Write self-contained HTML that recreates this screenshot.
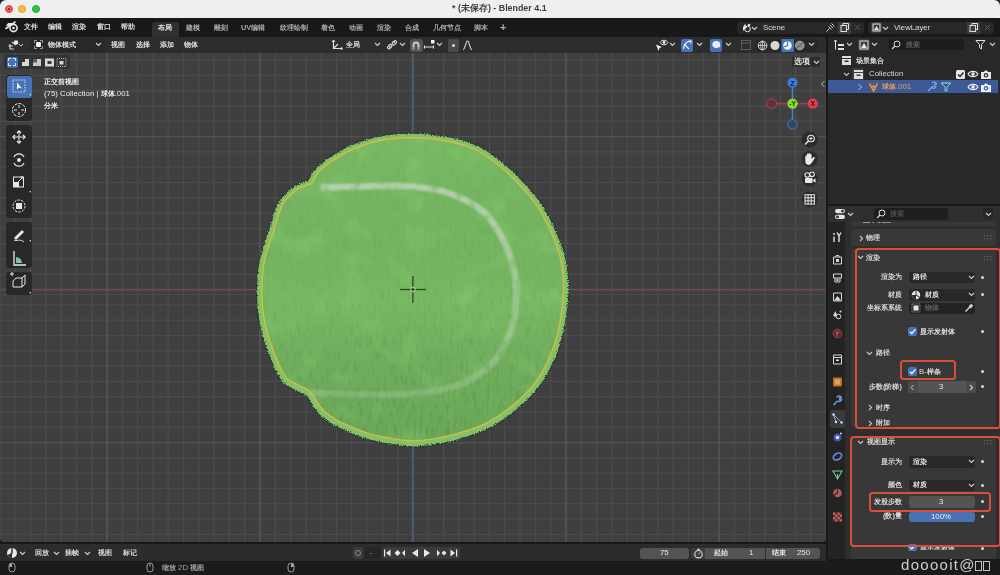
<!DOCTYPE html>
<html><head><meta charset="utf-8">
<style>
*{margin:0;padding:0;box-sizing:border-box}
html,body{width:1000px;height:575px;overflow:hidden;background:#181818;font-family:"Liberation Sans",sans-serif;color:#d8d8d8}
.a{position:absolute}
.t{position:absolute;font-size:7.4px;line-height:10px;white-space:nowrap;will-change:transform;font-weight:600}
.n{font-weight:400;font-size:7.8px}
#title{left:0;top:0;width:1000px;height:18px;background:#efeff0}
#topbar{left:0;top:18px;width:1000px;height:19px;background:#181818}
#outl{left:828px;top:37px;width:172px;height:167px;background:#282828}
#props{left:828px;top:206px;width:172px;height:353px;background:#303030}
#tl{left:0;top:544px;width:826px;height:16.5px;background:#2c2c2c}
#status{left:0;top:560.5px;width:1000px;height:14.5px;background:#1b1b1b}
</style></head><body>
<div id="title" class="a">
 <div class="a" style="left:5.2px;top:5.2px;width:8px;height:8px;border-radius:50%;background:#ec5e56;border:0.5px solid #d8483f"></div>
 <div class="a" style="left:18.4px;top:5.2px;width:8px;height:8px;border-radius:50%;background:#f5bd3c;border:0.5px solid #dca22a"></div>
 <div class="a" style="left:31.6px;top:5.2px;width:8px;height:8px;border-radius:50%;background:#2fc443;border:0.5px solid #22a834"></div>
 <div class="t" style="left:452px;top:3px;font-size:8.9px;line-height:11px;color:#3c3c3c;font-weight:bold">* (未保存) - Blender 4.1</div>
</div>
<svg class="a" style="left:0;top:0" width="8" height="8" viewBox="0 0 8 8"><path d="M0 0 L6 0 A6 6 0 0 0 0 6 Z" fill="#1f2a22"/></svg>
<svg class="a" style="left:992px;top:0" width="8" height="8" viewBox="0 0 8 8"><path d="M8 0 L2 0 A6 6 0 0 1 8 6 Z" fill="#2a2a2a"/></svg>
<div class="a" style="left:8px;top:8px;width:2.4px;height:2.4px;border-radius:50%;background:#8c1410"></div>
<div id="topbar" class="a">
 <svg class="a" style="left:4.5px;top:2px" width="14" height="13" viewBox="0 0 14 13"><path d="M1 8.5 L5.5 5 L2.5 5 L3.5 3.8 L7.5 3.8 L10 2" fill="none" stroke="#e8e8e8" stroke-width="1.6" stroke-linecap="round"/><circle cx="8.5" cy="8" r="3.6" fill="none" stroke="#e8e8e8" stroke-width="1.6"/><circle cx="8.5" cy="8" r="1.3" fill="#e8e8e8"/></svg>
 <div class="t" style="left:23.5px;top:4px;color:#dcdcdc">文件</div>
 <div class="t" style="left:47.5px;top:4px;color:#dcdcdc">编辑</div>
 <div class="t" style="left:72px;top:4px;color:#dcdcdc">渲染</div>
 <div class="t" style="left:96.5px;top:4px;color:#dcdcdc">窗口</div>
 <div class="t" style="left:121px;top:4px;color:#dcdcdc">帮助</div>
 <div class="a" style="left:152px;top:4px;width:27px;height:15px;background:#303030;border-radius:3px 3px 0 0"></div>
 <div class="t" style="left:157.5px;top:5px;color:#e8e8e8">布局</div>
 <div class="t" style="left:185.5px;top:5px;color:#a8a8a8">建模</div>
 <div class="t" style="left:213.5px;top:5px;color:#a8a8a8">雕刻</div>
 <div class="t" style="left:241px;top:5px;color:#a8a8a8">UV编辑</div>
 <div class="t" style="left:280px;top:5px;color:#a8a8a8">纹理绘制</div>
 <div class="t" style="left:321px;top:5px;color:#a8a8a8">着色</div>
 <div class="t" style="left:349px;top:5px;color:#a8a8a8">动画</div>
 <div class="t" style="left:377px;top:5px;color:#a8a8a8">渲染</div>
 <div class="t" style="left:405px;top:5px;color:#a8a8a8">合成</div>
 <div class="t" style="left:433px;top:5px;color:#a8a8a8">几何节点</div>
 <div class="t" style="left:474px;top:5px;color:#a8a8a8">脚本</div>
 <div class="t" style="left:500px;top:3px;font-size:11px;line-height:12px;color:#a8a8a8">+</div>
</div>
<svg class="a" style="left:0;top:0" width="1000" height="575" viewBox="0 0 1000 575">
 <defs>
  <clipPath id="vpc"><rect x="0" y="37" width="826" height="505" rx="4"/></clipPath>
  <clipPath id="ballc"><path d="M318.7 171.9 C320.9 169.5 323.3 167.0 328.5 163.4 C333.7 159.8 341.8 154.2 350.0 150.5 C358.2 146.8 368.0 143.1 378.0 141.0 C388.0 138.9 399.3 137.9 410.0 137.8 C420.7 137.7 432.7 138.9 442.0 140.2 C451.3 141.5 458.8 143.3 466.0 145.8 C473.2 148.3 478.0 150.4 485.0 155.0 C492.0 159.6 499.4 165.1 507.9 173.2 C516.4 181.3 528.4 193.8 535.7 203.8 C543.0 213.8 547.3 223.5 551.5 233.0 C555.7 242.5 559.0 251.5 561.0 261.0 C563.0 270.5 563.6 281.1 563.6 290.0 C563.6 298.9 562.4 306.6 561.3 314.3 C560.2 322.0 559.2 328.5 557.0 336.2 C554.8 343.9 552.0 352.5 548.1 360.6 C544.2 368.7 539.2 377.6 533.5 384.9 C527.8 392.2 521.3 398.3 514.0 404.4 C506.7 410.5 497.7 417.0 489.7 421.4 C481.7 425.8 473.6 428.4 466.0 431.0 C458.4 433.6 453.0 435.2 444.0 436.8 C435.0 438.4 424.0 441.2 412.0 440.8 C400.0 440.4 383.5 437.3 372.0 434.4 C360.5 431.5 350.2 426.6 343.0 423.3 C335.8 420.0 332.6 417.9 328.5 414.8 C324.4 411.8 321.1 408.1 318.7 405.0 C316.2 401.9 315.4 398.9 313.8 396.5 C312.2 394.1 310.8 392.0 309.0 390.5 C307.2 389.0 305.3 388.6 302.9 387.4 C300.5 386.2 297.5 385.1 294.4 383.1 C291.3 381.1 288.2 381.5 284.5 375.5 C280.8 369.5 275.4 356.7 272.0 347.3 C268.6 337.9 265.8 328.4 264.1 319.0 C262.4 309.6 261.9 300.3 261.9 290.9 C261.9 281.5 262.2 272.6 264.1 262.7 C266.0 252.8 270.5 240.9 273.5 231.3 C276.5 221.7 279.3 211.1 282.2 205.0 C285.1 198.9 288.1 197.7 290.7 195.0 C293.3 192.3 295.4 190.6 298.0 189.0 C300.6 187.4 304.3 186.2 306.5 185.3 C308.7 184.4 310.0 184.7 311.4 183.5 C312.8 182.3 313.8 179.9 315.0 178.0 C316.2 176.1 316.4 174.3 318.7 171.9Z"/></clipPath>
  <pattern id="grid" x="412.4" y="289" width="15.3" height="15.3" patternUnits="userSpaceOnUse">
   <rect x="0" y="0" width="15.3" height="1.1" fill="#4c4c4c"/>
   <rect x="0" y="0" width="1.1" height="15.3" fill="#4c4c4c"/>
  </pattern>
  <pattern id="grid10" x="412.4" y="289" width="153" height="153" patternUnits="userSpaceOnUse">
   <rect x="0" y="0" width="153" height="1.1" fill="#525252"/>
   <rect x="0" y="0" width="1.1" height="153" fill="#585858"/>
  </pattern>
  <filter id="fur" x="-10%" y="-10%" width="120%" height="120%">
   <feTurbulence type="fractalNoise" baseFrequency="1.1" numOctaves="2" seed="3" result="n"/>
   <feDisplacementMap in="SourceGraphic" in2="n" scale="4" xChannelSelector="R" yChannelSelector="G"/>
  </filter>
  <filter id="tex" x="0" y="0" width="100%" height="100%" filterUnits="userSpaceOnUse" color-interpolation-filters="sRGB">
   <feTurbulence type="fractalNoise" baseFrequency="0.3 0.08" numOctaves="3" seed="11" result="n"/>
   <feColorMatrix in="n" type="matrix" values="0 0 0 0 0.25  0 0 0 0 0.45  0 0 0 0 0.2  4 0 0 0 -2.1"/>
   <feGaussianBlur stdDeviation="0.6"/>
  </filter>
  <filter id="soft" x="-5%" y="-5%" width="110%" height="110%" color-interpolation-filters="sRGB"><feGaussianBlur stdDeviation="0.9" result="b"/>
   <feTurbulence type="fractalNoise" baseFrequency="0.1" numOctaves="2" seed="9" result="n"/>
   <feColorMatrix in="n" type="matrix" values="0 0 0 0 0  0 0 0 0 0  0 0 0 0 0  1.6 0 0 0 0.1" result="na"/>
   <feComposite in="b" in2="na" operator="in"/></filter>
  <linearGradient id="mg" x1="0" y1="0" x2="0" y2="1"><stop offset="0" stop-color="#fff" stop-opacity="0.15"/><stop offset="0.55" stop-color="#fff" stop-opacity="0.35"/><stop offset="1" stop-color="#fff" stop-opacity="1"/></linearGradient>
  <mask id="tm" maskUnits="userSpaceOnUse" x="255" y="130" width="320" height="320"><rect x="255" y="130" width="320" height="320" fill="url(#mg)"/></mask>
  <linearGradient id="seamg" x1="0" y1="185" x2="0" y2="395" gradientUnits="userSpaceOnUse"><stop offset="0" stop-color="#c9d8c4" stop-opacity="0.75"/><stop offset="0.5" stop-color="#c4d6bd" stop-opacity="0.6"/><stop offset="1" stop-color="#b4cfa8" stop-opacity="0.38"/></linearGradient>
  <filter id="mot" x="0" y="0" width="100%" height="100%" filterUnits="userSpaceOnUse" color-interpolation-filters="sRGB">
   <feTurbulence type="fractalNoise" baseFrequency="0.035" numOctaves="2" seed="5"/>
   <feColorMatrix type="matrix" values="0 0 0 0 0.6  0 0 0 0 0.85  0 0 0 0 0.5  3 0 0 0 -1.5"/>
  </filter>
  <linearGradient id="shade" x1="0" y1="0" x2="0" y2="1">
   <stop offset="0" stop-color="#8fcf70" stop-opacity="0.10"/>
   <stop offset="0.55" stop-color="#000" stop-opacity="0"/>
   <stop offset="1" stop-color="#2e5e22" stop-opacity="0.18"/>
  </linearGradient>
 </defs>
 <g clip-path="url(#vpc)">
  <rect x="0" y="37" width="826" height="505" fill="#3f3f3f"/>
  <rect x="0" y="37" width="826" height="505" fill="url(#grid)"/>
  <rect x="0" y="37" width="826" height="505" fill="url(#grid10)"/>
  <rect x="0" y="288.8" width="826" height="1.5" fill="#6e4a52"/>
  <rect x="0" y="294" width="826" height="1" fill="#4a5548" opacity="0.6"/>
  <rect x="411.7" y="37" width="1.8" height="505" fill="#4b5d72"/>
  <g transform="translate(0 0.8)"><path d="M318.7 171.9 C320.9 169.5 323.3 167.0 328.5 163.4 C333.7 159.8 341.8 154.2 350.0 150.5 C358.2 146.8 368.0 143.1 378.0 141.0 C388.0 138.9 399.3 137.9 410.0 137.8 C420.7 137.7 432.7 138.9 442.0 140.2 C451.3 141.5 458.8 143.3 466.0 145.8 C473.2 148.3 478.0 150.4 485.0 155.0 C492.0 159.6 499.4 165.1 507.9 173.2 C516.4 181.3 528.4 193.8 535.7 203.8 C543.0 213.8 547.3 223.5 551.5 233.0 C555.7 242.5 559.0 251.5 561.0 261.0 C563.0 270.5 563.6 281.1 563.6 290.0 C563.6 298.9 562.4 306.6 561.3 314.3 C560.2 322.0 559.2 328.5 557.0 336.2 C554.8 343.9 552.0 352.5 548.1 360.6 C544.2 368.7 539.2 377.6 533.5 384.9 C527.8 392.2 521.3 398.3 514.0 404.4 C506.7 410.5 497.7 417.0 489.7 421.4 C481.7 425.8 473.6 428.4 466.0 431.0 C458.4 433.6 453.0 435.2 444.0 436.8 C435.0 438.4 424.0 441.2 412.0 440.8 C400.0 440.4 383.5 437.3 372.0 434.4 C360.5 431.5 350.2 426.6 343.0 423.3 C335.8 420.0 332.6 417.9 328.5 414.8 C324.4 411.8 321.1 408.1 318.7 405.0 C316.2 401.9 315.4 398.9 313.8 396.5 C312.2 394.1 310.8 392.0 309.0 390.5 C307.2 389.0 305.3 388.6 302.9 387.4 C300.5 386.2 297.5 385.1 294.4 383.1 C291.3 381.1 288.2 381.5 284.5 375.5 C280.8 369.5 275.4 356.7 272.0 347.3 C268.6 337.9 265.8 328.4 264.1 319.0 C262.4 309.6 261.9 300.3 261.9 290.9 C261.9 281.5 262.2 272.6 264.1 262.7 C266.0 252.8 270.5 240.9 273.5 231.3 C276.5 221.7 279.3 211.1 282.2 205.0 C285.1 198.9 288.1 197.7 290.7 195.0 C293.3 192.3 295.4 190.6 298.0 189.0 C300.6 187.4 304.3 186.2 306.5 185.3 C308.7 184.4 310.0 184.7 311.4 183.5 C312.8 182.3 313.8 179.9 315.0 178.0 C316.2 176.1 316.4 174.3 318.7 171.9Z" fill="none" stroke="#262626" stroke-width="12" opacity="0.4" filter="url(#fur)"/></g>
  <g transform="translate(0 0.8)"><path d="M318.7 171.9 C320.9 169.5 323.3 167.0 328.5 163.4 C333.7 159.8 341.8 154.2 350.0 150.5 C358.2 146.8 368.0 143.1 378.0 141.0 C388.0 138.9 399.3 137.9 410.0 137.8 C420.7 137.7 432.7 138.9 442.0 140.2 C451.3 141.5 458.8 143.3 466.0 145.8 C473.2 148.3 478.0 150.4 485.0 155.0 C492.0 159.6 499.4 165.1 507.9 173.2 C516.4 181.3 528.4 193.8 535.7 203.8 C543.0 213.8 547.3 223.5 551.5 233.0 C555.7 242.5 559.0 251.5 561.0 261.0 C563.0 270.5 563.6 281.1 563.6 290.0 C563.6 298.9 562.4 306.6 561.3 314.3 C560.2 322.0 559.2 328.5 557.0 336.2 C554.8 343.9 552.0 352.5 548.1 360.6 C544.2 368.7 539.2 377.6 533.5 384.9 C527.8 392.2 521.3 398.3 514.0 404.4 C506.7 410.5 497.7 417.0 489.7 421.4 C481.7 425.8 473.6 428.4 466.0 431.0 C458.4 433.6 453.0 435.2 444.0 436.8 C435.0 438.4 424.0 441.2 412.0 440.8 C400.0 440.4 383.5 437.3 372.0 434.4 C360.5 431.5 350.2 426.6 343.0 423.3 C335.8 420.0 332.6 417.9 328.5 414.8 C324.4 411.8 321.1 408.1 318.7 405.0 C316.2 401.9 315.4 398.9 313.8 396.5 C312.2 394.1 310.8 392.0 309.0 390.5 C307.2 389.0 305.3 388.6 302.9 387.4 C300.5 386.2 297.5 385.1 294.4 383.1 C291.3 381.1 288.2 381.5 284.5 375.5 C280.8 369.5 275.4 356.7 272.0 347.3 C268.6 337.9 265.8 328.4 264.1 319.0 C262.4 309.6 261.9 300.3 261.9 290.9 C261.9 281.5 262.2 272.6 264.1 262.7 C266.0 252.8 270.5 240.9 273.5 231.3 C276.5 221.7 279.3 211.1 282.2 205.0 C285.1 198.9 288.1 197.7 290.7 195.0 C293.3 192.3 295.4 190.6 298.0 189.0 C300.6 187.4 304.3 186.2 306.5 185.3 C308.7 184.4 310.0 184.7 311.4 183.5 C312.8 182.3 313.8 179.9 315.0 178.0 C316.2 176.1 316.4 174.3 318.7 171.9Z" fill="#80c266" stroke="#80c266" stroke-width="9.5" filter="url(#fur)"/></g>
  <path d="M318.7 171.9 C320.9 169.5 323.3 167.0 328.5 163.4 C333.7 159.8 341.8 154.2 350.0 150.5 C358.2 146.8 368.0 143.1 378.0 141.0 C388.0 138.9 399.3 137.9 410.0 137.8 C420.7 137.7 432.7 138.9 442.0 140.2 C451.3 141.5 458.8 143.3 466.0 145.8 C473.2 148.3 478.0 150.4 485.0 155.0 C492.0 159.6 499.4 165.1 507.9 173.2 C516.4 181.3 528.4 193.8 535.7 203.8 C543.0 213.8 547.3 223.5 551.5 233.0 C555.7 242.5 559.0 251.5 561.0 261.0 C563.0 270.5 563.6 281.1 563.6 290.0 C563.6 298.9 562.4 306.6 561.3 314.3 C560.2 322.0 559.2 328.5 557.0 336.2 C554.8 343.9 552.0 352.5 548.1 360.6 C544.2 368.7 539.2 377.6 533.5 384.9 C527.8 392.2 521.3 398.3 514.0 404.4 C506.7 410.5 497.7 417.0 489.7 421.4 C481.7 425.8 473.6 428.4 466.0 431.0 C458.4 433.6 453.0 435.2 444.0 436.8 C435.0 438.4 424.0 441.2 412.0 440.8 C400.0 440.4 383.5 437.3 372.0 434.4 C360.5 431.5 350.2 426.6 343.0 423.3 C335.8 420.0 332.6 417.9 328.5 414.8 C324.4 411.8 321.1 408.1 318.7 405.0 C316.2 401.9 315.4 398.9 313.8 396.5 C312.2 394.1 310.8 392.0 309.0 390.5 C307.2 389.0 305.3 388.6 302.9 387.4 C300.5 386.2 297.5 385.1 294.4 383.1 C291.3 381.1 288.2 381.5 284.5 375.5 C280.8 369.5 275.4 356.7 272.0 347.3 C268.6 337.9 265.8 328.4 264.1 319.0 C262.4 309.6 261.9 300.3 261.9 290.9 C261.9 281.5 262.2 272.6 264.1 262.7 C266.0 252.8 270.5 240.9 273.5 231.3 C276.5 221.7 279.3 211.1 282.2 205.0 C285.1 198.9 288.1 197.7 290.7 195.0 C293.3 192.3 295.4 190.6 298.0 189.0 C300.6 187.4 304.3 186.2 306.5 185.3 C308.7 184.4 310.0 184.7 311.4 183.5 C312.8 182.3 313.8 179.9 315.0 178.0 C316.2 176.1 316.4 174.3 318.7 171.9Z" fill="#77b863"/>
  <g clip-path="url(#ballc)">
   <rect x="255" y="130" width="320" height="320" fill="url(#shade)"/>
   <rect x="255" y="130" width="320" height="320" filter="url(#mot)" opacity="0.25"/>
   <rect x="255" y="130" width="320" height="320" filter="url(#tex)" opacity="0.25" mask="url(#tm)"/>
  </g>
  <path d="M321.0 187.5 C328.3 187.3 350.9 186.8 365.0 186.5 C379.1 186.2 391.9 185.0 405.6 186.0 C419.3 187.0 433.9 188.1 447.0 192.5 C460.1 196.9 474.0 203.2 484.0 212.5 C494.0 221.8 501.6 234.9 507.0 248.0 C512.4 261.1 516.2 276.3 516.5 291.0 C516.8 305.7 513.7 323.3 509.0 336.0 C504.3 348.7 497.4 358.7 488.4 367.0 C479.4 375.3 466.4 381.7 455.0 386.0 C443.6 390.3 432.5 391.6 420.0 393.0 C407.5 394.4 393.2 394.3 380.0 394.5 C366.8 394.7 352.2 394.3 340.5 394.0 C328.8 393.7 315.1 392.8 310.0 392.5" fill="none" stroke="url(#seamg)" stroke-width="6.5" filter="url(#soft)"/>
  <path d="M318.7 171.9 C320.9 169.5 323.3 167.0 328.5 163.4 C333.7 159.8 341.8 154.2 350.0 150.5 C358.2 146.8 368.0 143.1 378.0 141.0 C388.0 138.9 399.3 137.9 410.0 137.8 C420.7 137.7 432.7 138.9 442.0 140.2 C451.3 141.5 458.8 143.3 466.0 145.8 C473.2 148.3 478.0 150.4 485.0 155.0 C492.0 159.6 499.4 165.1 507.9 173.2 C516.4 181.3 528.4 193.8 535.7 203.8 C543.0 213.8 547.3 223.5 551.5 233.0 C555.7 242.5 559.0 251.5 561.0 261.0 C563.0 270.5 563.6 281.1 563.6 290.0 C563.6 298.9 562.4 306.6 561.3 314.3 C560.2 322.0 559.2 328.5 557.0 336.2 C554.8 343.9 552.0 352.5 548.1 360.6 C544.2 368.7 539.2 377.6 533.5 384.9 C527.8 392.2 521.3 398.3 514.0 404.4 C506.7 410.5 497.7 417.0 489.7 421.4 C481.7 425.8 473.6 428.4 466.0 431.0 C458.4 433.6 453.0 435.2 444.0 436.8 C435.0 438.4 424.0 441.2 412.0 440.8 C400.0 440.4 383.5 437.3 372.0 434.4 C360.5 431.5 350.2 426.6 343.0 423.3 C335.8 420.0 332.6 417.9 328.5 414.8 C324.4 411.8 321.1 408.1 318.7 405.0 C316.2 401.9 315.4 398.9 313.8 396.5 C312.2 394.1 310.8 392.0 309.0 390.5 C307.2 389.0 305.3 388.6 302.9 387.4 C300.5 386.2 297.5 385.1 294.4 383.1 C291.3 381.1 288.2 381.5 284.5 375.5 C280.8 369.5 275.4 356.7 272.0 347.3 C268.6 337.9 265.8 328.4 264.1 319.0 C262.4 309.6 261.9 300.3 261.9 290.9 C261.9 281.5 262.2 272.6 264.1 262.7 C266.0 252.8 270.5 240.9 273.5 231.3 C276.5 221.7 279.3 211.1 282.2 205.0 C285.1 198.9 288.1 197.7 290.7 195.0 C293.3 192.3 295.4 190.6 298.0 189.0 C300.6 187.4 304.3 186.2 306.5 185.3 C308.7 184.4 310.0 184.7 311.4 183.5 C312.8 182.3 313.8 179.9 315.0 178.0 C316.2 176.1 316.4 174.3 318.7 171.9Z" fill="none" stroke="#d8b848" stroke-width="1.4"/>
  <g stroke="#2c4a1e" stroke-width="1.3">
   <line x1="400" y1="289.5" x2="426" y2="289.5"/><line x1="412.9" y1="276" x2="412.9" y2="303"/>
  </g>
  <circle cx="412.9" cy="289.5" r="2.3" fill="none" stroke="#c9d9a0" stroke-width="0.9"/>
 </g>
</svg>

<!-- viewport header -->
<div class="a" style="left:0;top:37px;width:826px;height:16px;background:#2d2d2d;border-radius:4px 4px 0 0"></div>
<svg class="a" style="left:8px;top:39px" width="16" height="12" viewBox="0 0 16 12"><path d="M2 10 L2 5 M0.5 7 L5 7 M2 10 L6 10 M4 3 L8 6" stroke="#d8d8d8" stroke-width="1.2" fill="none"/><circle cx="8" cy="3.5" r="2.3" fill="#e8e8e8"/><path d="M11 5 L13 7 L15 5" stroke="#cfcfcf" stroke-width="1" fill="none"/></svg>
<div class="a" style="left:31px;top:38.5px;width:74px;height:13px;background:#282828;border-radius:3px"></div>
<div class="a" style="left:34px;top:40px;width:9px;height:9px;border:1px dashed #9a9a9a;border-radius:1px"></div>
<div class="a" style="left:36px;top:42px;width:5px;height:5px;background:#f0f0f0;border-radius:1px"></div>
<div class="t" style="left:47.5px;top:40px;color:#dedede">物体模式</div>
<svg class="a" style="left:95px;top:42px" width="7" height="5" viewBox="0 0 7 5"><path d="M1 1 L3.5 3.5 L6 1" stroke="#d0d0d0" stroke-width="1.1" fill="none"/></svg>
<div class="t" style="left:111px;top:40px;color:#dedede">视图</div>
<div class="t" style="left:135.5px;top:40px;color:#dedede">选择</div>
<div class="t" style="left:159.5px;top:40px;color:#dedede">添加</div>
<div class="t" style="left:183.5px;top:40px;color:#dedede">物体</div>
<!-- transform orientation -->
<svg class="a" style="left:331px;top:39px" width="12" height="12" viewBox="0 0 12 12"><path d="M2.5 1 L2.5 9.5 L10.5 9.5 M2.5 9.5 L7 5" stroke="#e0e0e0" stroke-width="1.2" fill="none"/><path d="M1 3 L2.5 1 L4 3" stroke="#e0e0e0" stroke-width="1" fill="none"/><circle cx="10.5" cy="9.5" r="1.2" fill="#e0e0e0"/></svg>
<div class="t" style="left:346px;top:40px;color:#dedede">全局</div>
<svg class="a" style="left:374px;top:42px" width="7" height="5" viewBox="0 0 7 5"><path d="M1 1 L3.5 3.5 L6 1" stroke="#d0d0d0" stroke-width="1.1" fill="none"/></svg>
<svg class="a" style="left:386px;top:39px" width="12" height="12" viewBox="0 0 12 12"><path d="M3 8.5 L4.5 7 M7.5 4 L9 2.5" stroke="#e0e0e0" stroke-width="1.2"/><rect x="1.2" y="6.2" width="5" height="3" rx="1.5" transform="rotate(-45 3.7 7.7)" stroke="#e0e0e0" fill="none" stroke-width="1.1"/><rect x="5.8" y="2.3" width="5" height="3" rx="1.5" transform="rotate(-45 8.3 3.8)" stroke="#e0e0e0" fill="none" stroke-width="1.1"/></svg>
<svg class="a" style="left:398.5px;top:42px" width="7" height="5" viewBox="0 0 7 5"><path d="M1 1 L3.5 3.5 L6 1" stroke="#d0d0d0" stroke-width="1.1" fill="none"/></svg>
<div class="a" style="left:409.5px;top:38.5px;width:13px;height:13px;background:#545454;border-radius:3px"></div>
<svg class="a" style="left:410px;top:39px" width="12" height="12" viewBox="0 0 12 12"><path d="M3.5 10.5 L3.5 6 A2.5 2.5 0 0 1 8.5 6 L8.5 10.5" stroke="#c8c8c8" stroke-width="2" fill="none"/><path d="M2.5 9 L4.5 9 M7.5 9 L9.5 9" stroke="#4a4a4a" stroke-width="0.8"/></svg>
<svg class="a" style="left:423px;top:39px" width="13" height="12" viewBox="0 0 13 12"><path d="M1 8 L11 8 M1.5 6.5 L1.5 9.5 M10.5 6.5 L10.5 9.5" stroke="#e0e0e0" stroke-width="1.1" fill="none"/><rect x="8" y="1" width="3.5" height="3.5" fill="#f4f4f4"/></svg>
<svg class="a" style="left:435.5px;top:42px" width="7" height="5" viewBox="0 0 7 5"><path d="M1 1 L3.5 3.5 L6 1" stroke="#d0d0d0" stroke-width="1.1" fill="none"/></svg>
<div class="a" style="left:447.5px;top:38.5px;width:11px;height:13px;background:#4a4a4a;border-radius:2px"></div>
<div class="a" style="left:451.5px;top:43.5px;width:3px;height:3px;background:#dcdcdc;border-radius:50%"></div>
<svg class="a" style="left:462px;top:39px" width="11" height="12" viewBox="0 0 11 12"><path d="M1 10.5 C3.5 10.5 3.5 2 5.5 2 C7.5 2 7.5 10.5 10 10.5" stroke="#d8d8d8" stroke-width="1.1" fill="none"/></svg>
<!-- right header icons -->
<svg class="a" style="left:654px;top:38px" width="16" height="14" viewBox="0 0 16 14"><path d="M6 4.5 C8 1.5 12 1.5 14 4.5 C12 7.5 8 7.5 6 4.5Z" stroke="#e8e8e8" stroke-width="1" fill="none"/><circle cx="10" cy="4.5" r="1.4" fill="#e8e8e8"/><path d="M2 6.5 L8 9 L5.5 10 L4.5 13 Z" fill="#f0f0f0"/></svg>
<svg class="a" style="left:669px;top:42px" width="7" height="5" viewBox="0 0 7 5"><path d="M1 1 L3.5 3.5 L6 1" stroke="#d0d0d0" stroke-width="1.1" fill="none"/></svg>
<div class="a" style="left:680.5px;top:38.5px;width:12px;height:13px;background:#4772b3;border-radius:2px"></div>
<svg class="a" style="left:680.5px;top:39px" width="12" height="12" viewBox="0 0 12 12"><path d="M2.5 10 C3 5 6 2.5 10 2" stroke="#eaf0ff" stroke-width="1.2" fill="none"/><path d="M3 5 L8 10 M7.5 2 L10 2 L10 4.5" stroke="#eaf0ff" stroke-width="1.1" fill="none"/></svg>
<svg class="a" style="left:696px;top:42px" width="7" height="5" viewBox="0 0 7 5"><path d="M1 1 L3.5 3.5 L6 1" stroke="#d0d0d0" stroke-width="1.1" fill="none"/></svg>
<div class="a" style="left:710px;top:38.5px;width:12px;height:13px;background:#4772b3;border-radius:2px"></div>
<svg class="a" style="left:710px;top:39px" width="12" height="12" viewBox="0 0 12 12"><circle cx="6.3" cy="6" r="4" fill="#e6eeff"/><path d="M2 7 C3 10 7 10.5 9.5 8.5" stroke="#4772b3" stroke-width="1.3" fill="none"/></svg>
<svg class="a" style="left:725px;top:42px" width="7" height="5" viewBox="0 0 7 5"><path d="M1 1 L3.5 3.5 L6 1" stroke="#d0d0d0" stroke-width="1.1" fill="none"/></svg>
<svg class="a" style="left:740px;top:39px" width="12" height="12" viewBox="0 0 12 12"><rect x="1.5" y="1.5" width="9" height="9" stroke="#5c5c5c" stroke-width="1" fill="none"/><path d="M1.5 4 L10.5 4" stroke="#5c5c5c"/></svg>
<div class="a" style="left:756px;top:38.5px;width:62px;height:13px;background:#282828;border-radius:3px"></div>
<svg class="a" style="left:756px;top:38.5px" width="62" height="13" viewBox="0 0 62 13"><circle cx="6.6" cy="6.5" r="4.3" stroke="#d8d8d8" stroke-width="1" fill="none"/><path d="M2.3 6.5 L10.9 6.5 M6.6 2.2 L6.6 10.8" stroke="#d8d8d8" stroke-width="0.8"/><ellipse cx="6.6" cy="6.5" rx="2" ry="4.3" stroke="#d8d8d8" stroke-width="0.8" fill="none"/><circle cx="19" cy="6.5" r="4.5" fill="#d6d6d6"/><rect x="25.5" y="0" width="12.5" height="13" fill="#4772b3"/><circle cx="31.5" cy="6.5" r="4.3" fill="#f0f4ff"/><path d="M31.5 2.2 L31.5 6.5 L27.5 8" stroke="#4772b3" stroke-width="1.2" fill="none"/><circle cx="43.8" cy="6.5" r="4.3" fill="#8a8a8a" stroke="#c0c0c0" stroke-width="0.8"/><path d="M40.5 9 L47 4" stroke="#555" stroke-width="1"/></svg>
<svg class="a" style="left:808px;top:42px" width="7" height="5" viewBox="0 0 7 5"><path d="M1 1 L3.5 3.5 L6 1" stroke="#d0d0d0" stroke-width="1.1" fill="none"/></svg>

<!-- select mode icons -->
<div class="a" style="left:4px;top:55px;width:66px;height:14px;background:rgba(40,40,40,0.55);border-radius:3px"></div>
<div class="a" style="left:6.5px;top:56.5px;width:11px;height:11px;background:#4772b3;border-radius:2px"></div>
<div class="a" style="left:8px;top:58px;width:8px;height:8px;border:1px dashed #cfe0ff"></div>
<svg class="a" style="left:19px;top:56px" width="50" height="12" viewBox="0 0 50 12"><path d="M3 10 L3 6 L6 6 L6 3 L10 3 L10 10Z" fill="#d8d8d8"/><rect x="14" y="3" width="8" height="7" fill="#c8c8c8"/><rect x="14" y="3" width="4" height="3.5" fill="#5a5a5a"/><rect x="26" y="2.5" width="9" height="8" fill="#d8d8d8"/><rect x="28.5" y="5" width="4" height="3" fill="#3a3a3a"/><rect x="38" y="2.5" width="9" height="8" fill="none" stroke="#bdbdbd" stroke-dasharray="1 1"/><rect x="40.5" y="5" width="4" height="3.5" fill="#d8d8d8"/></svg>
<!-- toolbar -->
<div class="a" style="left:6px;top:75px;width:26px;height:46px;background:#282828;border-radius:3px"></div>
<div class="a" style="left:6px;top:125px;width:26px;height:93px;background:#282828;border-radius:3px"></div>
<div class="a" style="left:6px;top:222px;width:26px;height:46px;background:#282828;border-radius:3px"></div>
<div class="a" style="left:6px;top:272px;width:26px;height:23px;background:#282828;border-radius:3px"></div>
<div class="a" style="left:6.5px;top:76px;width:25px;height:22px;background:#4772b3;border-radius:3px"></div>
<svg class="a" style="left:6px;top:75px" width="26" height="222" viewBox="0 0 26 222">
 <g fill="none" stroke="#e8e8e8" stroke-width="1">
  <rect x="7" y="5" width="12" height="12" stroke-dasharray="1.5 1.2" stroke="#d4e2ff"/>
  <path d="M11 7.5 L11 14.5 L13 12.5 L16 13.5 Z" fill="#ffffff" stroke="none"/>
  <circle cx="13" cy="35" r="6.5" stroke-dasharray="3 1.2"/>
  <path d="M13 30 L13 33 M13 37 L13 40 M8 35 L11 35 M15 35 L18 35"/>
  <path d="M13 56 L13 68 M7 62 L19 62"/>
  <path d="M11 58 L13 56 L15 58 M11 66 L13 68 L15 66 M9 60 L7 62 L9 64 M17 60 L19 62 L17 64" stroke-width="1.3"/>
  <path d="M8 82 A5.5 5.5 0 0 1 18 82 M18 88 A5.5 5.5 0 0 1 8 88" stroke-width="1.2"/>
  <circle cx="13" cy="85" r="2" fill="#e8e8e8" stroke="none"/>
  <rect x="7.5" y="102" width="10" height="10"/>
  <rect x="8" y="107" width="5" height="5" fill="#e8e8e8" stroke="none"/>
  <path d="M12 107 L17 102 M14.5 102 L17 102 L17 104.5"/>
  <circle cx="13" cy="131" r="6" stroke-dasharray="2.5 1.2"/>
  <rect x="10" y="128" width="6" height="6" fill="#e8e8e8" stroke="none"/>
  <path d="M8 163 L16 155 L18 157 L10 165 Z" fill="#e8e8e8" stroke="none"/>
  <path d="M8 165 C10 167 14 163 18 167" stroke-width="0.9"/>
  <path d="M8 176 L8 190 L20 190" stroke-width="1.3"/>
  <path d="M10 188 L10 182 A6 6 0 0 1 16 188 Z" fill="#7ec49a" stroke="none"/>
  <path d="M10 203 L16 203 L16 212 L7 212 L7 206 Z M7 206 L10 203 M16 203 L19 200 L19 209 L16 212" stroke-width="1"/>
  <path d="M4 199 L8 199 M6 197 L6 201" stroke-width="1"/>
 </g>
 <g fill="#c8c8c8"><path d="M23 19 L25 19 L25 21Z"/><path d="M23 116 L25 116 L25 118Z"/><path d="M23 165 L25 165 L25 167Z"/><path d="M23 217 L25 217 L25 219Z"/></g>
</svg>
<!-- overlay text -->
<div class="t" style="left:44px;top:76.5px;font-size:7.4px;color:#ececec">正交前视图</div>
<div class="t" style="left:44px;top:88.5px;font-size:7.4px;color:#ececec"><span class="n">(75) Collection | </span>球体<span class="n">.001</span></div>
<div class="t" style="left:44px;top:100.5px;font-size:7.4px;color:#ececec">分米</div>
<!-- options -->
<div class="a" style="left:792px;top:57px;width:28px;height:10px;background:rgba(40,40,40,0.8);border-radius:2px"></div>
<div class="t" style="left:794px;top:57px;font-size:7.6px;color:#e0e0e0">选项</div>
<svg class="a" style="left:812.5px;top:60px" width="7" height="5" viewBox="0 0 7 5"><path d="M1 1 L3.5 3.5 L6 1" stroke="#d0d0d0" stroke-width="1.1" fill="none"/></svg>
<svg class="a" style="left:820px;top:80px" width="6" height="8" viewBox="0 0 6 8"><path d="M4.5 1 L1.5 4 L4.5 7" stroke="#bdbdbd" stroke-width="1" fill="none"/></svg>
<!-- nav gizmo -->
<svg class="a" style="left:760px;top:72px" width="66" height="64" viewBox="760 72 66 64">
 <path d="M771.7 103.6 L812.8 103.6" stroke="#a33c4a" stroke-width="1.6"/>
 <path d="M792.5 82.8 L792.5 124.4" stroke="#4a7cc0" stroke-width="1.6"/>
 <circle cx="771.7" cy="103.6" r="4.8" fill="#5e3038" stroke="#b8404f" stroke-width="1"/>
 <circle cx="792.5" cy="124.4" r="4.8" fill="#2e4866" stroke="#4a7cc0" stroke-width="1"/>
 <circle cx="812.8" cy="103.6" r="5" fill="#e0404f"/>
 <circle cx="792.5" cy="82.8" r="5" fill="#3d7fdc"/>
 <circle cx="792.5" cy="103.6" r="5.2" fill="#8ad82a"/>
 <text x="812.8" y="106.3" font-size="7" font-family="Liberation Sans" font-weight="bold" text-anchor="middle" fill="#3a0a10">X</text>
 <text x="792.5" y="85.5" font-size="7" font-family="Liberation Sans" font-weight="bold" text-anchor="middle" fill="#0a1a3a">Z</text>
 <text x="792.5" y="106.3" font-size="6.5" font-family="Liberation Sans" font-weight="bold" text-anchor="middle" fill="#1a3a00">-Y</text>
</svg>
<!-- nav buttons -->
<svg class="a" style="left:799px;top:130px" width="22" height="82" viewBox="799 130 22 82">
 <circle cx="809.7" cy="139.7" r="8" fill="rgba(30,30,30,0.6)"/>
 <circle cx="809.7" cy="159" r="8" fill="rgba(30,30,30,0.6)"/>
 <circle cx="809.7" cy="178.6" r="8" fill="rgba(30,30,30,0.6)"/>
 <circle cx="809.7" cy="199.4" r="8" fill="rgba(30,30,30,0.6)"/>
 <circle cx="811" cy="138.5" r="3.3" fill="none" stroke="#eaeaea" stroke-width="1.1"/>
 <path d="M808.5 141 L805 144.5" stroke="#eaeaea" stroke-width="1.5"/>
 <path d="M811 136.8 L811 140.2 M809.3 138.5 L812.7 138.5" stroke="#eaeaea" stroke-width="0.9"/>
 <path d="M805.3 157 C805.3 155 806.8 155 806.8 157 L806.8 155 C806.8 153 808.4 153 808.4 155 L808.4 154.3 C808.4 152.5 810 152.5 810 154.3 L810 155 C810 153.3 811.6 153.3 811.6 155 L811.6 159 L813 157.5 C814 156.5 815.3 157.3 814.6 158.5 L812 162.5 C811 164 810 164.8 808.5 164.8 C806.3 164.8 805.3 163.5 805.3 161 Z" fill="#eaeaea"/>
 <circle cx="807.3" cy="175" r="2.3" fill="none" stroke="#eaeaea" stroke-width="1.1"/>
 <circle cx="812" cy="174.3" r="2.3" fill="none" stroke="#eaeaea" stroke-width="1.1"/>
 <rect x="805" y="178" width="7.5" height="5" rx="0.8" fill="#eaeaea"/>
 <path d="M812.5 180.5 L815.5 178.3 L815.5 182.7 Z" fill="#eaeaea"/>
 <g stroke="#eaeaea" stroke-width="1" fill="none"><rect x="805" y="194.7" width="9.4" height="9.4"/><path d="M808.1 194.7 L808.1 204.1 M811.2 194.7 L811.2 204.1 M805 197.8 L814.4 197.8 M805 200.9 L814.4 200.9"/></g>
</svg>
<div id="outl" class="a"></div>

<!-- scene / viewlayer selectors in topbar -->
<div class="a" style="left:737px;top:21.5px;width:127px;height:12px;background:#282828;border-radius:3px"></div>
<svg class="a" style="left:741px;top:22px" width="11" height="11" viewBox="0 0 11 11"><path d="M2 9 L2 5 L4 2 L6 5" fill="#e0e0e0"/><circle cx="6.5" cy="7" r="2.8" fill="none" stroke="#e0e0e0" stroke-width="1"/><circle cx="8" cy="3" r="1.3" fill="#e0e0e0"/></svg>
<svg class="a" style="left:751px;top:26px" width="7" height="5" viewBox="0 0 7 5"><path d="M1 1 L3.5 3.5 L6 1" stroke="#cfcfcf" stroke-width="1.1" fill="none"/></svg>
<div class="t n" style="left:763px;top:22.5px;color:#dedede">Scene</div>
<svg class="a" style="left:825px;top:22px" width="11" height="11" viewBox="0 0 11 11"><path d="M1.5 9.5 L4.5 6.5 M3.5 4.5 L6.5 7.5 M5 3 L8 6 M6.5 1.5 L9.5 4.5" stroke="#cfcfcf" stroke-width="1" fill="none"/></svg>
<div class="a" style="left:838px;top:21.5px;width:13px;height:12px;background:#3d3d3d"></div>
<svg class="a" style="left:839px;top:22px" width="11" height="11" viewBox="0 0 11 11"><rect x="2" y="3.5" width="5.5" height="6" fill="none" stroke="#e0e0e0" stroke-width="1"/><path d="M4 3.5 L4 1.5 L9.5 1.5 L9.5 7.5 L7.5 7.5" fill="none" stroke="#e0e0e0" stroke-width="1"/></svg>
<svg class="a" style="left:853px;top:23px" width="9" height="9" viewBox="0 0 9 9"><path d="M2 2 L7 7 M7 2 L2 7" stroke="#5a5a5a" stroke-width="1"/></svg>
<div class="a" style="left:868px;top:21.5px;width:126px;height:12px;background:#282828;border-radius:3px"></div>
<div class="a" style="left:871px;top:22px;width:11px;height:11px;background:#3d3d3d;border-radius:2px"></div>
<svg class="a" style="left:871px;top:22px" width="11" height="11" viewBox="0 0 11 11"><rect x="2" y="2" width="7" height="7" fill="none" stroke="#e0e0e0" stroke-width="1"/><path d="M3 8 L5.5 4 L8 8Z" fill="#e0e0e0"/></svg>
<svg class="a" style="left:882px;top:26px" width="7" height="5" viewBox="0 0 7 5"><path d="M1 1 L3.5 3.5 L6 1" stroke="#cfcfcf" stroke-width="1.1" fill="none"/></svg>
<div class="t n" style="left:893.5px;top:22.5px;color:#dedede">ViewLayer</div>
<div class="a" style="left:967px;top:21.5px;width:13px;height:12px;background:#3d3d3d"></div>
<svg class="a" style="left:968px;top:22px" width="11" height="11" viewBox="0 0 11 11"><rect x="2" y="3.5" width="5.5" height="6" fill="none" stroke="#e0e0e0" stroke-width="1"/><path d="M4 3.5 L4 1.5 L9.5 1.5 L9.5 7.5 L7.5 7.5" fill="none" stroke="#e0e0e0" stroke-width="1"/></svg>
<svg class="a" style="left:982.5px;top:23px" width="9" height="9" viewBox="0 0 9 9"><path d="M2 2 L7 7 M7 2 L2 7" stroke="#5a5a5a" stroke-width="1"/></svg>
<!-- outliner -->
<div class="a" style="left:828px;top:37px;width:172px;height:16px;background:#282828"></div>
<svg class="a" style="left:833px;top:38.5px" width="12" height="13" viewBox="0 0 12 13"><rect x="1.5" y="1" width="2" height="2" fill="#e0e0e0"/><rect x="2" y="3" width="1" height="7.5" fill="#e0e0e0"/><rect x="5" y="5" width="6" height="2" fill="#e0e0e0"/><rect x="5" y="9" width="6" height="2" fill="#e0e0e0"/></svg>
<svg class="a" style="left:845.5px;top:42px" width="7" height="5" viewBox="0 0 7 5"><path d="M1 1 L3.5 3.5 L6 1" stroke="#cfcfcf" stroke-width="1.1" fill="none"/></svg>
<div class="a" style="left:858px;top:38.5px;width:12px;height:12px;background:#3d3d3d;border-radius:2px"></div>
<svg class="a" style="left:858px;top:38.5px" width="12" height="12" viewBox="0 0 12 12"><rect x="2" y="2" width="8" height="8" fill="none" stroke="#e8e8e8" stroke-width="1"/><path d="M3 9 L6 4 L9 9Z" fill="#e8e8e8"/></svg>
<svg class="a" style="left:871px;top:42px" width="7" height="5" viewBox="0 0 7 5"><path d="M1 1 L3.5 3.5 L6 1" stroke="#cfcfcf" stroke-width="1.1" fill="none"/></svg>
<div class="a" style="left:889px;top:39px;width:75px;height:11px;background:#1d1d1d;border-radius:3px"></div>
<svg class="a" style="left:891px;top:39.5px" width="10" height="10" viewBox="0 0 10 10"><circle cx="6" cy="4" r="3" fill="none" stroke="#dcdcdc" stroke-width="1"/><path d="M4 6 L1 9" stroke="#dcdcdc" stroke-width="1.3"/></svg>
<div class="t" style="left:905.5px;top:39.5px;color:#5e5e5e">搜索</div>
<svg class="a" style="left:975px;top:39px" width="11" height="11" viewBox="0 0 11 11"><path d="M1 1.5 L10 1.5 L6.5 5.5 L6.5 10 L4.5 8.5 L4.5 5.5 Z" fill="none" stroke="#e0e0e0" stroke-width="1"/></svg>
<svg class="a" style="left:988.5px;top:42px" width="7" height="5" viewBox="0 0 7 5"><path d="M1 1 L3.5 3.5 L6 1" stroke="#cfcfcf" stroke-width="1.1" fill="none"/></svg>
<svg class="a" style="left:841px;top:55px" width="11" height="11" viewBox="0 0 11 11"><rect x="1" y="1" width="9" height="9" fill="#dedede"/><rect x="1" y="3" width="9" height="1" fill="#282828"/><rect x="3.5" y="5.5" width="4" height="1.5" fill="#282828"/></svg>
<div class="t" style="left:856px;top:56px;color:#dcdcdc">场景集合</div>
<svg class="a" style="left:843px;top:72px" width="7" height="5" viewBox="0 0 7 5"><path d="M1 1 L3.5 3.5 L6 1" stroke="#bdbdbd" stroke-width="1.1" fill="none"/></svg>
<div class="a" style="left:852px;top:68px;width:12px;height:12px;background:#3d3d3d;border-radius:2px"></div>
<svg class="a" style="left:852.5px;top:68.5px" width="11" height="11" viewBox="0 0 11 11"><rect x="1" y="1" width="9" height="9" fill="#dedede"/><rect x="1" y="3" width="9" height="1" fill="#3d3d3d"/><rect x="3.5" y="5.5" width="4" height="1.5" fill="#3d3d3d"/></svg>
<div class="t n" style="left:869px;top:69px;color:#d8d8d8">Collection</div>
<div class="a" style="left:955.5px;top:69.5px;width:9px;height:9px;background:#e8e8e8;border-radius:1.5px"></div>
<svg class="a" style="left:955.5px;top:69.5px" width="9" height="9" viewBox="0 0 9 9"><path d="M2 4.5 L4 6.5 L7.5 2.5" stroke="#222" stroke-width="1.4" fill="none"/></svg>
<svg class="a" style="left:967px;top:69px" width="12" height="10" viewBox="0 0 12 10"><path d="M1 5 C3 1.5 9 1.5 11 5 C9 8.5 3 8.5 1 5Z" fill="none" stroke="#e8e8e8" stroke-width="1.1"/><circle cx="6" cy="5" r="1.8" fill="#e8e8e8"/></svg>
<svg class="a" style="left:980px;top:68.5px" width="12" height="11" viewBox="0 0 12 11"><path d="M1 3 L4 3 L5 1.5 L7 1.5 L8 3 L11 3 L11 10 L1 10Z" fill="#e8e8e8"/><circle cx="6" cy="6.3" r="2.2" fill="#282828"/><circle cx="6" cy="6.3" r="1.1" fill="#e8e8e8"/></svg>
<div class="a" style="left:828px;top:80px;width:170px;height:13px;background:#3b5a96"></div>
<svg class="a" style="left:857px;top:83px" width="6" height="8" viewBox="0 0 6 8"><path d="M1.5 1 L4.5 4 L1.5 7" stroke="#a8c0ee" stroke-width="1" fill="none"/></svg>
<div class="a" style="left:867px;top:81px;width:12px;height:11px;background:#5a5a6a;border-radius:2px;opacity:0.6"></div>
<svg class="a" style="left:867.5px;top:81.5px" width="11" height="10" viewBox="0 0 11 10"><path d="M1.5 1.5 L5.5 9 L9.5 1.5" stroke="#e8a04a" stroke-width="1.4" fill="none"/><circle cx="5.5" cy="4.5" r="1.3" fill="#e8a04a"/></svg>
<div class="t" style="left:881.5px;top:82px;color:#e89d57">球体<span class="n">.001</span></div>
<svg class="a" style="left:926px;top:81px" width="12" height="11" viewBox="0 0 12 11"><path d="M2 10 L7 5 M6 2 C7.5 0.5 10 1 10.5 3 L8.5 3.5 L8.5 5 L10 5.5 C9 8 6.5 7.5 6 6.5" stroke="#7ba7f0" stroke-width="1.2" fill="none"/></svg>
<svg class="a" style="left:940px;top:81px" width="12" height="11" viewBox="0 0 12 11"><path d="M1 2 L11 2 L7 6 L7 10 L5 10 L5 6 Z" fill="none" stroke="#7ed3c4" stroke-width="1"/><path d="M3 1 L3 3 M6 0.5 L6 3 M9 1 L9 3" stroke="#7ed3c4" stroke-width="0.8"/></svg>
<svg class="a" style="left:967px;top:82px" width="12" height="10" viewBox="0 0 12 10"><path d="M1 5 C3 1.5 9 1.5 11 5 C9 8.5 3 8.5 1 5Z" fill="none" stroke="#e8eeff" stroke-width="1.1"/><circle cx="6" cy="5" r="1.8" fill="#e8eeff"/></svg>
<svg class="a" style="left:980px;top:81.5px" width="12" height="11" viewBox="0 0 12 11"><path d="M1 3 L4 3 L5 1.5 L7 1.5 L8 3 L11 3 L11 10 L1 10Z" fill="#e8eeff"/><circle cx="6" cy="6.3" r="2.2" fill="#3b5a96"/><circle cx="6" cy="6.3" r="1.1" fill="#e8eeff"/></svg>
<div id="props" class="a"></div>
<!-- properties -->
<div class="a" style="left:828px;top:206px;width:172px;height:16px;background:#2f2f2f"></div>
<svg class="a" style="left:834px;top:208px" width="12" height="12" viewBox="0 0 12 12"><rect x="1" y="1" width="10" height="4.2" rx="2.1" fill="#e4e4e4"/><rect x="1" y="6.8" width="10" height="4.2" rx="2.1" fill="#e4e4e4"/><circle cx="8.5" cy="3.1" r="1.4" fill="#2f2f2f"/><circle cx="3.5" cy="8.9" r="1.4" fill="#2f2f2f"/></svg>
<svg class="a" style="left:846.5px;top:212px" width="7" height="5" viewBox="0 0 7 5"><path d="M1 1 L3.5 3.5 L6 1" stroke="#cfcfcf" stroke-width="1.1" fill="none"/></svg>
<div class="a" style="left:873.5px;top:208px;width:74px;height:11.5px;background:#1f1f1f;border-radius:3px"></div>
<svg class="a" style="left:876px;top:208.5px" width="10" height="10" viewBox="0 0 10 10"><circle cx="6" cy="4" r="3" fill="none" stroke="#dcdcdc" stroke-width="1"/><path d="M4 6 L1 9" stroke="#dcdcdc" stroke-width="1.3"/></svg>
<div class="t" style="left:889.5px;top:208.5px;color:#4e4e4e">搜索</div>
<div class="a" style="left:983px;top:208px;width:10px;height:11px;background:#272727;border-radius:2px"></div>
<svg class="a" style="left:984.5px;top:212px" width="7" height="5" viewBox="0 0 7 5"><path d="M1 1 L3.5 3.5 L6 1" stroke="#cfcfcf" stroke-width="1.1" fill="none"/></svg>
<div class="a" style="left:828px;top:222px;width:17px;height:337px;background:#232323"></div>
<div class="a" style="left:829.5px;top:410px;width:15.5px;height:18px;background:#3a3a3a;border-radius:3px 0 0 3px"></div>
<svg class="a" style="left:828px;top:222px" width="17" height="310" viewBox="828 222 17 310">
 <g fill="none" stroke="#d8d8d8" stroke-width="1">
  <path d="M834 233 L834 235 M834 236.5 L834 242" stroke-width="1.5"/><path d="M837 232.5 L839 236 L841 232.5 M839 236 L839 242" stroke-width="1.5"/>
  <path d="M833.5 257 L841.5 257 L841.5 264 L833.5 264 Z M835.5 257 L836.2 255.5 L838.8 255.5 L839.5 257"/><rect x="836" y="259" width="3" height="3" fill="#d8d8d8" stroke="none"/>
  <path d="M833.5 274 L841.5 274 L841.5 278 L833.5 278 Z M835 278 L835 282 L840 282 L840 278"/><rect x="836.5" y="279" width="2" height="2" fill="#d8d8d8" stroke="none"/>
  <path d="M833.5 293 L841.5 293 L841.5 301 L833.5 301 Z"/><path d="M834 300.5 L837.5 296 L841 300.5 Z" fill="#d8d8d8" stroke="none"/>
  <path d="M835.5 311 L833.5 314.5 A1.8 1.8 0 0 0 837 315.5 Z" fill="#d8d8d8" stroke="none"/><circle cx="838.5" cy="316.5" r="2.3"/><circle cx="840.5" cy="311.5" r="1" fill="#d8d8d8" stroke="none"/>
 </g>
 <circle cx="837.5" cy="333.5" r="4.3" fill="#5a2a32" stroke="#a04050" stroke-width="0.9"/>
 <path d="M835.5 331 C837 332 838 334 837 336.5 M839.5 331.5 L836 334" stroke="#d06070" stroke-width="0.9" fill="none"/>
 <g fill="none" stroke="#d8d8d8" stroke-width="1"><path d="M833.5 355 L841.5 355 L841.5 364 L833.5 364 Z M833.5 357.5 L841.5 357.5"/><rect x="836" y="359.5" width="3" height="1.5" fill="#d8d8d8" stroke="none"/></g>
 <rect x="833" y="377.5" width="9" height="9" rx="1" fill="#b86e28"/><rect x="834.7" y="379.2" width="5.6" height="5.6" fill="#e0a060"/>
 <path d="M833.5 405 L837.5 401 M836.8 397.5 C837.8 395.5 840.5 395.8 841.3 397.5 L839.5 398 L839.8 399.5 L841.5 399.5 C841 401.5 838.5 401.8 837.5 401" stroke="#6d9fe8" stroke-width="1.5" fill="none"/>
 <g stroke="#8fb8d8" stroke-width="0.9" fill="none"><path d="M833.5 414.5 L841.5 422.5 M833.5 414.5 L836 422"/></g><g fill="#d0dff0"><circle cx="833.5" cy="414.5" r="1.2"/><circle cx="841.5" cy="422.5" r="1.2"/><circle cx="836" cy="422" r="1.2"/></g>
 <circle cx="837.5" cy="437.5" r="4" fill="#3f56a8"/><circle cx="837.5" cy="437.5" r="1.8" fill="#e0e8ff"/><circle cx="841" cy="433.5" r="0.9" fill="#e0e8ff"/>
 <ellipse cx="837.5" cy="456.5" rx="4.5" ry="3" transform="rotate(-30 837.5 456.5)" fill="none" stroke="#6b7ed8" stroke-width="1.8"/>
 <path d="M833 471 L842 471 L837.5 479 Z" fill="none" stroke="#6fcf8f" stroke-width="1.1"/><path d="M837.5 474 L837.5 479" stroke="#6fcf8f"/>
 <circle cx="837.5" cy="493" r="4.3" fill="#b05a5a"/><path d="M837.5 488.7 L837.5 493 L833.8 495.5" stroke="#3a2020" stroke-width="1.1" fill="none"/>
 <g fill="#c86060"><rect x="833" y="512.50" width="9" height="9" fill="#5a3030"/><rect x="833" y="512.50" width="2.25" height="2.25"/><rect x="837.5" y="512.50" width="2.25" height="2.25"/><rect x="835.25" y="514.75" width="2.25" height="2.25"/><rect x="839.75" y="514.75" width="2.25" height="2.25"/><rect x="833" y="517.00" width="2.25" height="2.25"/><rect x="837.5" y="517.00" width="2.25" height="2.25"/><rect x="835.25" y="519.25" width="2.25" height="2.25"/><rect x="839.75" y="519.25" width="2.25" height="2.25"/></g>
</svg>
<div class="a" style="left:845px;top:222px;width:155px;height:337px;background:#2e2e2e"></div>
<div class="a" style="left:851px;top:222px;width:145px;height:4px;background:#383838;overflow:hidden"><div class="t" style="left:7px;top:-7px;color:#b8b8b8">› 显示设置</div></div>
<div class="a" style="left:851px;top:229px;width:145px;height:17px;background:#383838;border-radius:3px"></div>
<svg class="a" style="left:859px;top:235px" width="5" height="7" viewBox="0 0 5 7"><path d="M1 1 L3.5 3.5 L1 6" stroke="#c8c8c8" stroke-width="1.1" fill="none"/></svg>
<div class="t" style="left:866px;top:233px;color:#d6d6d6">物理</div>
<div class="a" style="left:851px;top:249px;width:145px;height:178px;background:#383838;border-radius:3px"></div>
<svg class="a" style="left:857px;top:255px" width="7" height="5" viewBox="0 0 7 5"><path d="M1 1 L3.5 3.5 L6 1" stroke="#c8c8c8" stroke-width="1.1" fill="none"/></svg>
<div class="t" style="left:866px;top:252.5px;color:#d6d6d6">渲染</div>
<div class="t" style="right:98.5px;top:272px;color:#d6d6d6">渲染为</div>
<div class="a" style="left:908.5px;top:271.5px;width:66px;height:11.5px;background:#282828;border-radius:3px"></div><div class="t" style="left:913px;top:272.25px;color:#e0e0e0">路径</div><svg class="a" style="left:967.5px;top:274.75px" width="7" height="5" viewBox="0 0 7 5"><path d="M1 1 L3.5 3.5 L6 1" stroke="#cfcfcf" stroke-width="1.1" fill="none"/></svg>
<div class="a" style="left:981.0px;top:275.5px;width:3px;height:3px;border-radius:50%;background:#d8d8d8"></div>
<div class="t" style="right:98.5px;top:289.5px;color:#d6d6d6">材质</div>
<div class="a" style="left:908.5px;top:289px;width:66px;height:11.5px;background:#282828;border-radius:3px"></div><div class="t" style="left:925px;top:289.75px;color:#e0e0e0">材质</div><svg class="a" style="left:967.5px;top:292.25px" width="7" height="5" viewBox="0 0 7 5"><path d="M1 1 L3.5 3.5 L6 1" stroke="#cfcfcf" stroke-width="1.1" fill="none"/></svg><svg class="a" style="left:911px;top:289.5px" width="10" height="10" viewBox="0 0 10 10"><circle cx="5" cy="5" r="4.2" fill="#e8e8e8"/><path d="M5 5 L5 9.2 A4.2 4.2 0 0 1 0.8 5 Z" fill="#2a2a2a"/><path d="M5 1 L5 5 L8.5 7" stroke="#2a2a2a" stroke-width="1" fill="none"/></svg>
<div class="a" style="left:981.0px;top:293.0px;width:3px;height:3px;border-radius:50%;background:#d8d8d8"></div>
<div class="t" style="right:98.5px;top:303px;color:#d6d6d6">坐标系系统</div>
<div class="a" style="left:908.5px;top:302.5px;width:66px;height:11px;background:#232323;border-radius:3px"></div>
<svg class="a" style="left:911px;top:303px" width="10" height="10" viewBox="0 0 10 10"><rect x="1" y="1" width="8" height="8" fill="none" stroke="#888" stroke-width="0.8" stroke-dasharray="2 1"/><rect x="2.5" y="2.5" width="5" height="5" fill="#e8e8e8"/></svg>
<div class="t" style="left:925px;top:303px;color:#5e5e5e">物体</div>
<svg class="a" style="left:964px;top:303px" width="10" height="10" viewBox="0 0 10 10"><path d="M1.5 8.5 L6 4 M5 2.5 L7.5 5" stroke="#e0e0e0" stroke-width="1.3"/><path d="M6.5 1.5 L8.5 3.5" stroke="#e0e0e0" stroke-width="2.2"/></svg>
<div class="a" style="left:907.5px;top:327.0px;width:9px;height:9px;background:#4772b3;border-radius:2px"></div><svg class="a" style="left:907.5px;top:327.0px" width="9" height="9" viewBox="0 0 9 9"><path d="M1.8 4.6 L3.8 6.6 L7.4 2.4" stroke="#fff" stroke-width="1.3" fill="none"/></svg>
<div class="t" style="left:920px;top:326.5px;color:#dcdcdc">显示发射体</div>
<div class="a" style="left:981.0px;top:330.0px;width:3px;height:3px;border-radius:50%;background:#d8d8d8"></div>
<svg class="a" style="left:866px;top:350.5px" width="7" height="5" viewBox="0 0 7 5"><path d="M1 1 L3.5 3.5 L6 1" stroke="#c8c8c8" stroke-width="1.1" fill="none"/></svg>
<div class="t" style="left:875.5px;top:347.5px;color:#d6d6d6">路径</div>
<div class="a" style="left:907.5px;top:367.0px;width:9px;height:9px;background:#4772b3;border-radius:2px"></div><svg class="a" style="left:907.5px;top:367.0px" width="9" height="9" viewBox="0 0 9 9"><path d="M1.8 4.6 L3.8 6.6 L7.4 2.4" stroke="#fff" stroke-width="1.3" fill="none"/></svg>
<div class="t" style="left:919px;top:366.5px;color:#dcdcdc"><span class="n">B-</span>样条</div>
<div class="a" style="left:981.0px;top:370.0px;width:3px;height:3px;border-radius:50%;background:#d8d8d8"></div>
<div class="t" style="right:98.5px;top:381.5px;color:#d6d6d6">步数(阶梯)</div>
<div class="a" style="left:907.5px;top:380.5px;width:68px;height:12px;background:#545454;border-radius:3px"></div>
<div class="a" style="left:907.5px;top:380.5px;width:10px;height:12px;background:#4a4a4a;border-radius:3px 0 0 3px"></div>
<div class="a" style="left:965.5px;top:380.5px;width:10px;height:12px;background:#4a4a4a;border-radius:0 3px 3px 0"></div>
<svg class="a" style="left:910px;top:383.5px" width="5" height="7" viewBox="0 0 5 7"><path d="M3.5 1 L1 3.5 L3.5 6" stroke="#cfcfcf" stroke-width="1" fill="none"/></svg>
<svg class="a" style="left:969px;top:383.5px" width="5" height="7" viewBox="0 0 5 7"><path d="M1 1 L3.5 3.5 L1 6" stroke="#cfcfcf" stroke-width="1.1" fill="none"/></svg>
<div class="t n" style="left:938.5px;top:381.5px;color:#e8e8e8">3</div>
<div class="a" style="left:981.0px;top:385.0px;width:3px;height:3px;border-radius:50%;background:#d8d8d8"></div>
<svg class="a" style="left:868px;top:404px" width="5" height="7" viewBox="0 0 5 7"><path d="M1 1 L3.5 3.5 L1 6" stroke="#c8c8c8" stroke-width="1.1" fill="none"/></svg>
<div class="t" style="left:875.5px;top:402.5px;color:#d6d6d6">时序</div>
<svg class="a" style="left:868px;top:419.5px" width="5" height="7" viewBox="0 0 5 7"><path d="M1 1 L3.5 3.5 L1 6" stroke="#c8c8c8" stroke-width="1.1" fill="none"/></svg>
<div class="t" style="left:875.5px;top:418px;color:#d6d6d6">附加</div>
<div class="a" style="left:851px;top:436px;width:145px;height:123px;background:#383838;border-radius:3px"></div>
<svg class="a" style="left:857px;top:439.5px" width="7" height="5" viewBox="0 0 7 5"><path d="M1 1 L3.5 3.5 L6 1" stroke="#c8c8c8" stroke-width="1.1" fill="none"/></svg>
<div class="t" style="left:867px;top:436.7px;color:#d6d6d6">视图显示</div>
<div class="t" style="right:98.5px;top:456.7px;color:#d6d6d6">显示为</div>
<div class="a" style="left:908.5px;top:456px;width:66px;height:11.5px;background:#282828;border-radius:3px"></div><div class="t" style="left:913px;top:456.75px;color:#e0e0e0">渲染</div><svg class="a" style="left:967.5px;top:459.25px" width="7" height="5" viewBox="0 0 7 5"><path d="M1 1 L3.5 3.5 L6 1" stroke="#cfcfcf" stroke-width="1.1" fill="none"/></svg>
<div class="a" style="left:981.0px;top:460.2px;width:3px;height:3px;border-radius:50%;background:#d8d8d8"></div>
<div class="t" style="right:98.5px;top:480.2px;color:#d6d6d6">颜色</div>
<div class="a" style="left:908.5px;top:479.5px;width:66px;height:11.5px;background:#282828;border-radius:3px"></div><div class="t" style="left:913px;top:480.25px;color:#e0e0e0">材质</div><svg class="a" style="left:967.5px;top:482.75px" width="7" height="5" viewBox="0 0 7 5"><path d="M1 1 L3.5 3.5 L6 1" stroke="#cfcfcf" stroke-width="1.1" fill="none"/></svg>
<div class="a" style="left:981.0px;top:483.7px;width:3px;height:3px;border-radius:50%;background:#d8d8d8"></div>
<div class="t" style="right:98.5px;top:496.7px;color:#d6d6d6">发股步数</div>
<div class="a" style="left:908.5px;top:496px;width:66px;height:11.5px;background:#545454;border-radius:3px"></div>
<div class="t n" style="left:938.5px;top:497px;color:#e8e8e8">3</div>
<div class="a" style="left:981.0px;top:500.2px;width:3px;height:3px;border-radius:50%;background:#d8d8d8"></div>
<div class="t" style="right:98.5px;top:511px;color:#d6d6d6">(数)量</div>
<div class="a" style="left:908.5px;top:511.5px;width:66px;height:10px;background:#4772b3;border-radius:3px"></div>
<div class="t n" style="left:931px;top:511.5px;color:#f0f0f0">100%</div>
<div class="a" style="left:981.0px;top:514.5px;width:3px;height:3px;border-radius:50%;background:#d8d8d8"></div>
<div class="a" style="left:907.5px;top:543.5px;width:9px;height:7px;background:#4772b3;border-radius:2px"></div><svg class="a" style="left:907.5px;top:543px" width="9" height="8" viewBox="0 0 9 9" preserveAspectRatio="none"><path d="M1.8 4.6 L3.8 6.6 L7.4 2.4" stroke="#fff" stroke-width="1.3" fill="none"/></svg>
<div class="t" style="left:920px;top:542.5px;color:#dcdcdc;transform:scaleY(0.7);transform-origin:0 50%">显示发射体</div>
<div class="a" style="left:981.0px;top:546.5px;width:3px;height:3px;border-radius:50%;background:#d8d8d8"></div>
<svg class="a" style="left:983px;top:234px" width="10" height="6" viewBox="0 0 10 6"><g fill="#5c5c5c"><rect x="1" y="1" width="1.3" height="1.3"/><rect x="4" y="1" width="1.3" height="1.3"/><rect x="7" y="1" width="1.3" height="1.3"/><rect x="1" y="4" width="1.3" height="1.3"/><rect x="4" y="4" width="1.3" height="1.3"/><rect x="7" y="4" width="1.3" height="1.3"/></g></svg>
<svg class="a" style="left:983px;top:255px" width="10" height="6" viewBox="0 0 10 6"><g fill="#5c5c5c"><rect x="1" y="1" width="1.3" height="1.3"/><rect x="4" y="1" width="1.3" height="1.3"/><rect x="7" y="1" width="1.3" height="1.3"/><rect x="1" y="4" width="1.3" height="1.3"/><rect x="4" y="4" width="1.3" height="1.3"/><rect x="7" y="4" width="1.3" height="1.3"/></g></svg>
<svg class="a" style="left:983px;top:439px" width="10" height="6" viewBox="0 0 10 6"><g fill="#5c5c5c"><rect x="1" y="1" width="1.3" height="1.3"/><rect x="4" y="1" width="1.3" height="1.3"/><rect x="7" y="1" width="1.3" height="1.3"/><rect x="1" y="4" width="1.3" height="1.3"/><rect x="4" y="4" width="1.3" height="1.3"/><rect x="7" y="4" width="1.3" height="1.3"/></g></svg>
<!-- red annotation boxes -->
<div class="a" style="left:855px;top:247.5px;width:146px;height:181px;border:2.5px solid #da4e3e;border-radius:4px"></div>
<div class="a" style="left:900.3px;top:359.9px;width:56px;height:19.8px;border:2.2px solid #da4e3e;border-radius:3.5px"></div>
<div class="a" style="left:849.8px;top:435.7px;width:151px;height:111px;border:2.5px solid #da4e3e;border-radius:4px"></div>
<div class="a" style="left:868.5px;top:492px;width:122px;height:19.5px;border:2.2px solid #da4e3e;border-radius:3.5px"></div>

<div id="tl" class="a"></div>
<div id="status" class="a"></div>

<!-- timeline header -->
<svg class="a" style="left:6px;top:547px" width="12" height="12" viewBox="0 0 12 12"><circle cx="6" cy="6" r="5" fill="#e8e8e8"/><path d="M6 1 L6 6 L3 9" stroke="#303030" stroke-width="1.5" fill="none"/><path d="M6 6 L6 11 A5 5 0 0 1 1.5 8Z" fill="#303030"/></svg>
<svg class="a" style="left:18.5px;top:551px" width="7" height="5" viewBox="0 0 7 5"><path d="M1 1 L3.5 3.5 L6 1" stroke="#cfcfcf" stroke-width="1.1" fill="none"/></svg>
<div class="t" style="left:34.5px;top:548px;color:#d6d6d6;">回放</div>
<svg class="a" style="left:53px;top:551px" width="7" height="5" viewBox="0 0 7 5"><path d="M1 1 L3.5 3.5 L6 1" stroke="#cfcfcf" stroke-width="1.1" fill="none"/></svg>
<div class="t" style="left:65px;top:548px;color:#d6d6d6;">插帧</div>
<svg class="a" style="left:83.5px;top:551px" width="7" height="5" viewBox="0 0 7 5"><path d="M1 1 L3.5 3.5 L6 1" stroke="#cfcfcf" stroke-width="1.1" fill="none"/></svg>
<div class="t" style="left:97.5px;top:548px;color:#d6d6d6;">视图</div>
<div class="t" style="left:122.5px;top:548px;color:#d6d6d6;">标记</div>
<div class="a" style="left:352.5px;top:547px;width:10.5px;height:12px;background:#3d3d3d;border-radius:2px"></div>
<div class="a" style="left:354.5px;top:549.5px;width:6.5px;height:6.5px;border-radius:50%;border:1px solid #8a8a8a"></div>
<div class="a" style="left:364.5px;top:547px;width:16px;height:12px;background:#262626;border-radius:0 3px 3px 0"></div><div class="a" style="left:369px;top:552.5px;width:4px;height:1px;background:#555"></div>
<div class="a" style="left:381.5px;top:547px;width:78px;height:12px;background:#3a3a3a;border-radius:3px"></div>
<svg class="a" style="left:381.5px;top:547px" width="78" height="12" viewBox="381.5 547 78 12">
 <g fill="#e8e8e8">
  <rect x="383.5" y="549.5" width="1.2" height="7"/><path d="M390 549.5 L385.5 553 L390 556.5Z"/>
  <path d="M394 553 L397 550 L400 553 L397 556Z"/><path d="M404.5 549.8 L401.5 553 L404.5 556.2Z"/>
  <path d="M417.5 549 L411.5 553 L417.5 557Z"/>
  <path d="M423.5 549 L429.5 553 L423.5 557Z"/>
  <path d="M436.5 549.8 L439.5 553 L436.5 556.2Z"/><path d="M441 553 L443.5 550.5 L446 553 L443.5 555.5Z"/>
  <path d="M450 549.5 L454.5 553 L450 556.5Z"/><rect x="455.5" y="549.5" width="1.2" height="7"/>
 </g>
</svg>
<div class="a" style="left:640px;top:547.5px;width:48.5px;height:11.5px;background:#545454;border-radius:3px"></div>
<div class="t n" style="left:659.5px;top:548px;color:#e8e8e8;">75</div>
<div class="a" style="left:691px;top:547.5px;width:14px;height:11.5px;background:#3d3d3d;border-radius:3px 0 0 3px"></div>
<svg class="a" style="left:693px;top:547.5px" width="11" height="11" viewBox="0 0 11 11"><circle cx="5.5" cy="6.2" r="3.7" fill="none" stroke="#e0e0e0" stroke-width="1.1"/><path d="M5.5 6.2 L7 4.5 M4.3 1.2 L6.7 1.2 M5.5 1.2 L5.5 2.5" stroke="#e0e0e0" stroke-width="1"/></svg>
<div class="a" style="left:705px;top:547.5px;width:60px;height:11.5px;background:#545454"></div>
<div class="a" style="left:765.5px;top:547.5px;width:54px;height:11.5px;background:#545454;border-radius:0 3px 3px 0"></div>
<div class="t" style="left:713.5px;top:548px;color:#e0e0e0;">起始</div>
<div class="t n" style="left:749px;top:548px;color:#e8e8e8;">1</div>
<div class="t" style="left:772px;top:548px;color:#e0e0e0;">结束</div>
<div class="t n" style="left:797px;top:548px;color:#e8e8e8;">250</div>
<!-- status bar -->
<svg class="a" style="left:8px;top:562px" width="8" height="11" viewBox="0 0 8 11"><rect x="1" y="1" width="6" height="9" rx="3" fill="none" stroke="#a8a8a8" stroke-width="0.9"/><rect x="1.5" y="1.5" width="2.5" height="3.5" fill="#a8a8a8"/></svg>
<svg class="a" style="left:146px;top:562px" width="8" height="11" viewBox="0 0 8 11"><rect x="1" y="1" width="6" height="9" rx="3" fill="none" stroke="#a8a8a8" stroke-width="0.9"/><rect x="3.5" y="2" width="1" height="2.5" fill="#a8a8a8"/></svg>
<div class="t" style="left:161.5px;top:562.5px;color:#a0a0a0;">缩放 <span class="n">2D</span> 视图</div>
<svg class="a" style="left:287px;top:562px" width="8" height="11" viewBox="0 0 8 11"><rect x="1" y="1" width="6" height="9" rx="3" fill="none" stroke="#a8a8a8" stroke-width="0.9"/><rect x="4" y="1.5" width="2.5" height="3.5" fill="#a8a8a8"/></svg>
<!-- watermark -->
<div class="t n" style="left:900.5px;top:556px;font-size:15px;line-height:17px;color:#cdcdcd;letter-spacing:1.3px">dooooit@</div>
<div class="a" style="left:975.3px;top:560.5px;width:6.6px;height:10.8px;border:1px solid #c4c4c4"></div>
<div class="a" style="left:983.2px;top:560.5px;width:6.8px;height:10.8px;border:1px solid #c4c4c4"></div>
</body></html>
